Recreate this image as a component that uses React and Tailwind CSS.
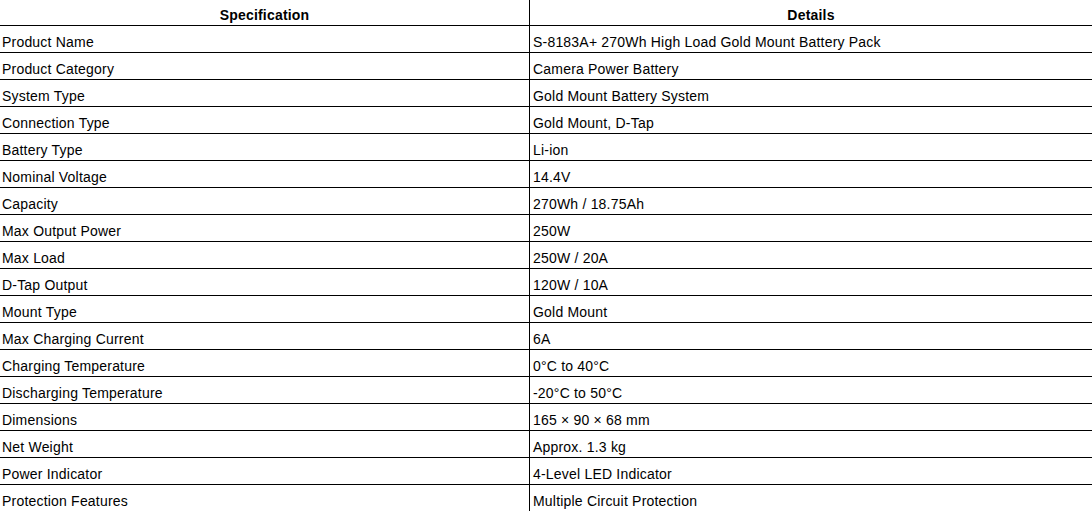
import React from "react";

const rows = [
  ["Product Name", "S-8183A+ 270Wh High Load Gold Mount Battery Pack"],
  ["Product Category", "Camera Power Battery"],
  ["System Type", "Gold Mount Battery System"],
  ["Connection Type", "Gold Mount, D-Tap"],
  ["Battery Type", "Li-ion"],
  ["Nominal Voltage", "14.4V"],
  ["Capacity", "270Wh / 18.75Ah"],
  ["Max Output Power", "250W"],
  ["Max Load", "250W / 20A"],
  ["D-Tap Output", "120W / 10A"],
  ["Mount Type", "Gold Mount"],
  ["Max Charging Current", "6A"],
  ["Charging Temperature", "0°C to 40°C"],
  ["Discharging Temperature", "-20°C to 50°C"],
  ["Dimensions", "165 × 90 × 68 mm"],
  ["Net Weight", "Approx. 1.3 kg"],
  ["Power Indicator", "4-Level LED Indicator"],
  ["Protection Features", "Multiple Circuit Protection"],
];

export default function App() {
  return (
    <div
      className="w-[1092px] h-[511px] overflow-hidden bg-white text-black text-[14px] tracking-[0.2px]"
      style={{ fontFamily: '"Liberation Sans", Arial, sans-serif' }}
    >
      <div className="grid grid-cols-[530px_562px] h-[26px] border-b border-black font-bold">
        <div className="border-r border-black text-center pt-[7px] leading-[16px]">Specification</div>
        <div className="text-center pt-[7px] leading-[16px]">Details</div>
      </div>
      {rows.map(([k, v]) => (
        <div key={k} className="grid grid-cols-[530px_562px] h-[27px] border-b border-black">
          <div className="border-r border-black pl-[2px] pt-[8px] leading-[16px] whitespace-nowrap">{k}</div>
          <div className="pl-[3px] pt-[8px] leading-[16px] whitespace-nowrap">{v}</div>
        </div>
      ))}
    </div>
  );
}
